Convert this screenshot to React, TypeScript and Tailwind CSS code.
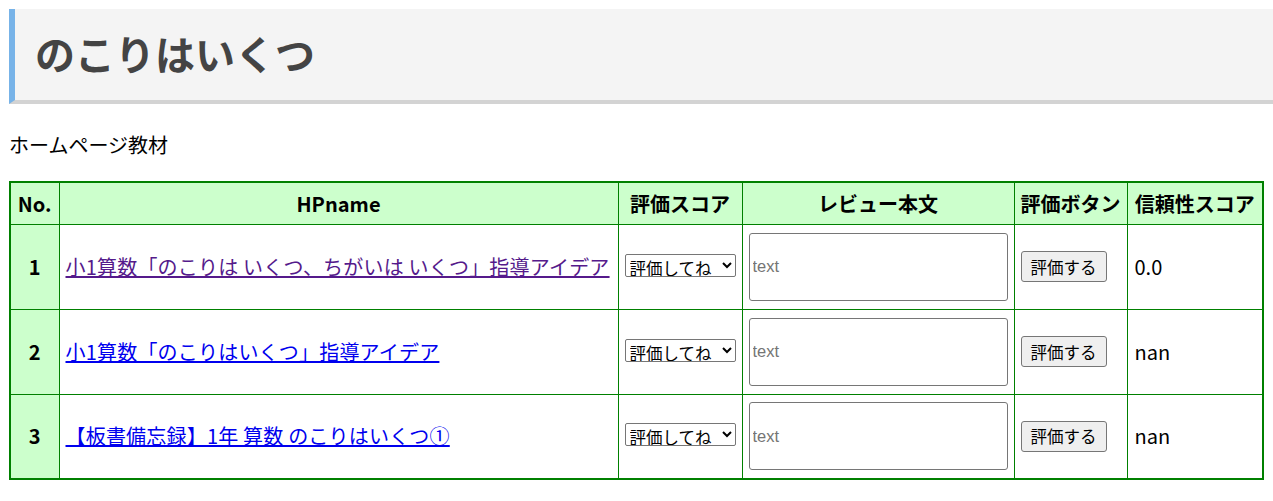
import React from "react";

type Row = { no: number; name: string; visited: boolean; score: string };

const rows: Row[] = [
  { no: 1, name: "小1算数「のこりは いくつ、ちがいは いくつ」指導アイデア", visited: true, score: "0.0" },
  { no: 2, name: "小1算数「のこりはいくつ」指導アイデア", visited: false, score: "nan" },
  { no: 3, name: "【板書備忘録】1年 算数 のこりはいくつ①", visited: false, score: "nan" },
];

const font = { fontFamily: '"Noto Sans CJK JP", sans-serif' };

export default function App() {
  return (
    <div className="min-h-[501px] bg-white text-black" style={font}>
      {/* 見出し */}
      <div className="ml-[9px] mt-[9px] h-[95px] bg-[#f4f4f4] border-l-[6px] border-l-[#77b3e8] border-b-[4px] border-b-[#d3d3d3] flex items-center pl-[20px] pb-[4px]">
        <h1 className="text-[40px] font-bold leading-none text-[#444444]">のこりはいくつ</h1>
      </div>

      <p className="ml-[9px] mt-[26px] text-[20px] leading-[30px]">ホームページ教材</p>

      <table className="ml-[9px] mt-[21px] w-[1253px] table-fixed border-collapse border-2 border-[#008000] text-[20px]">
        <colgroup>
          <col className="w-[49px]" />
          <col className="w-[559px]" />
          <col className="w-[124px]" />
          <col className="w-[272px]" />
          <col className="w-[113px]" />
          <col className="w-[136px]" />
        </colgroup>
        <thead>
          <tr className="h-[42px] bg-[#ccffcc]">
            {["No.", "HPname", "評価スコア", "レビュー本文", "評価ボタン", "信頼性スコア"].map((h) => (
              <th key={h} className="border border-[#008000] font-bold text-center whitespace-nowrap px-0 leading-tight">
                {h}
              </th>
            ))}
          </tr>
        </thead>
        <tbody>
          {rows.map((r) => (
            <tr key={r.no} className="h-[85px]">
              <td className="border border-[#008000] bg-[#ccffcc] text-center font-bold">{r.no}</td>
              <td className="border border-[#008000] pl-[6px] whitespace-nowrap tracking-[0.2px]">
                <a
                  href="#"
                  className={
                    r.visited
                      ? "underline text-[#551a8b] decoration-[#551a8b]"
                      : "underline text-[#0000ee] decoration-[#0000ee]"
                  }
                >
                  {r.name}
                </a>
              </td>
              <td className="border border-[#008000] pl-[6px]">
                <select className="w-[111px] h-[23px] border border-[#767676] rounded-[2px] text-[16.5px] leading-none bg-white text-black">
                  <option>評価してね</option>
                  <option>1</option>
                  <option>2</option>
                  <option>3</option>
                  <option>4</option>
                  <option>5</option>
                </select>
              </td>
              <td className="border border-[#008000] pl-[6px]">
                <input
                  type="text"
                  placeholder="text"
                  className="w-[259px] h-[68px] border border-[#767676] rounded-[3px] px-[3px] text-[16.5px] placeholder:text-[#757575] bg-white"
                  style={{ fontFamily: '"Liberation Sans", Arial, sans-serif' }}
                />
              </td>
              <td className="border border-[#008000] pl-[6px]">
                <button className="h-[31px] w-[86px] border border-[#767676] rounded-[3px] bg-[#efefef] text-[16.5px] leading-none text-black">
                  評価する
                </button>
              </td>
              <td className="border border-[#008000] pl-[7px]">{r.score}</td>
            </tr>
          ))}
        </tbody>
      </table>
    </div>
  );
}
